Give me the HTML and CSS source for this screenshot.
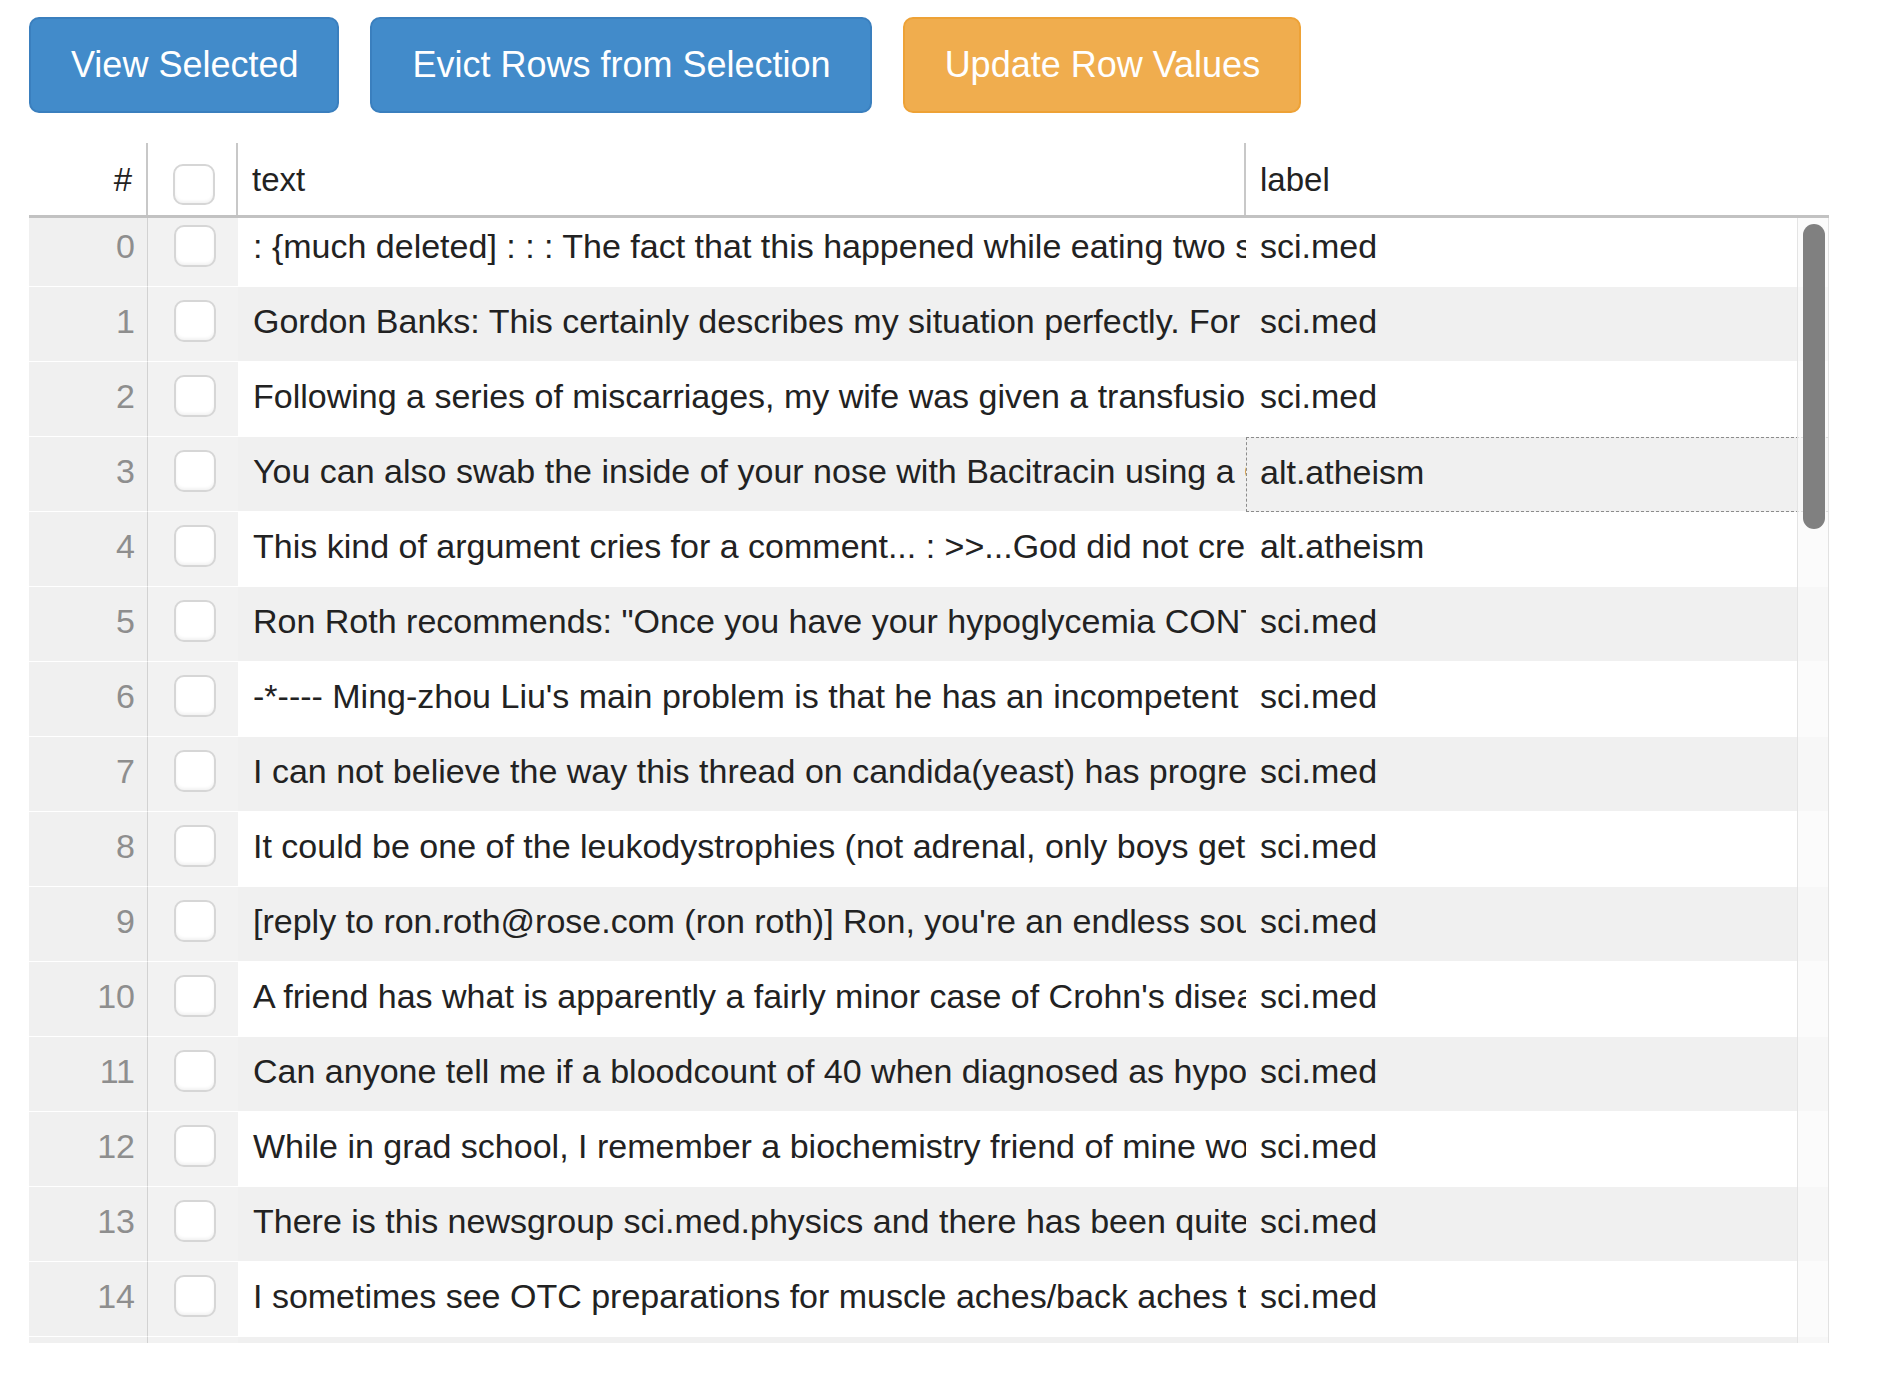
FILE: index.html
```html
<!DOCTYPE html>
<html lang="en">
<head>
<meta charset="utf-8">
<title>Grid</title>
<link rel="stylesheet" href="styles.css">
</head>
<body>
<div class="page">
  <div class="toolbar">
    <button class="btn btn-primary">View Selected</button>
    <button class="btn btn-primary">Evict Rows from Selection</button>
    <button class="btn btn-warning">Update Row Values</button>
  </div>
  <div class="grid">
    <div class="grid-header">
      <div class="hcell c-idx">#</div>
      <div class="hcell c-sel"><span class="cb cb-head"></span></div>
      <div class="hcell c-txt">text</div>
      <div class="hcell c-lbl">label</div>
    </div>
    <div class="viewport">
      <div class="rows">
        <div class="row even"><div class="cell c-idx">0</div><div class="cell c-sel"><span class="cb"></span></div><div class="cell c-txt">: {much deleted] : : : The fact that this happened while eating two servings of the same food</div><div class="cell c-lbl">sci.med</div></div>
        <div class="row odd"><div class="cell c-idx">1</div><div class="cell c-sel"><span class="cb"></span></div><div class="cell c-txt">Gordon Banks: This certainly describes my situation perfectly. For years I have</div><div class="cell c-lbl">sci.med</div></div>
        <div class="row even"><div class="cell c-idx">2</div><div class="cell c-sel"><span class="cb"></span></div><div class="cell c-txt">Following a series of miscarriages, my wife was given a transfusion of my white cells</div><div class="cell c-lbl">sci.med</div></div>
        <div class="row odd"><div class="cell c-idx">3</div><div class="cell c-sel"><span class="cb"></span></div><div class="cell c-txt">You can also swab the inside of your nose with Bacitracin using a Q-tip</div><div class="cell c-lbl focused">alt.atheism</div></div>
        <div class="row even"><div class="cell c-idx">4</div><div class="cell c-sel"><span class="cb"></span></div><div class="cell c-txt">This kind of argument cries for a comment... : &gt;&gt;...God did not create</div><div class="cell c-lbl">alt.atheism</div></div>
        <div class="row odd"><div class="cell c-idx">5</div><div class="cell c-sel"><span class="cb"></span></div><div class="cell c-txt">Ron Roth recommends: "Once you have your hypoglycemia CONTROLLED</div><div class="cell c-lbl">sci.med</div></div>
        <div class="row even"><div class="cell c-idx">6</div><div class="cell c-sel"><span class="cb"></span></div><div class="cell c-txt">-*---- Ming-zhou Liu's main problem is that he has an incompetent doctor</div><div class="cell c-lbl">sci.med</div></div>
        <div class="row odd"><div class="cell c-idx">7</div><div class="cell c-sel"><span class="cb"></span></div><div class="cell c-txt">I can not believe the way this thread on candida(yeast) has progressed</div><div class="cell c-lbl">sci.med</div></div>
        <div class="row even"><div class="cell c-idx">8</div><div class="cell c-sel"><span class="cb"></span></div><div class="cell c-txt">It could be one of the leukodystrophies (not adrenal, only boys get that one)</div><div class="cell c-lbl">sci.med</div></div>
        <div class="row odd"><div class="cell c-idx">9</div><div class="cell c-sel"><span class="cb"></span></div><div class="cell c-txt">[reply to ron.roth@rose.com (ron roth)] Ron, you're an endless source of</div><div class="cell c-lbl">sci.med</div></div>
        <div class="row even"><div class="cell c-idx">10</div><div class="cell c-sel"><span class="cb"></span></div><div class="cell c-txt">A friend has what is apparently a fairly minor case of Crohn's disease</div><div class="cell c-lbl">sci.med</div></div>
        <div class="row odd"><div class="cell c-idx">11</div><div class="cell c-sel"><span class="cb"></span></div><div class="cell c-txt">Can anyone tell me if a bloodcount of 40 when diagnosed as hypoglycemic</div><div class="cell c-lbl">sci.med</div></div>
        <div class="row even"><div class="cell c-idx">12</div><div class="cell c-sel"><span class="cb"></span></div><div class="cell c-txt">While in grad school, I remember a biochemistry friend of mine working on</div><div class="cell c-lbl">sci.med</div></div>
        <div class="row odd"><div class="cell c-idx">13</div><div class="cell c-sel"><span class="cb"></span></div><div class="cell c-txt">There is this newsgroup sci.med.physics and there has been quite a lot</div><div class="cell c-lbl">sci.med</div></div>
        <div class="row even"><div class="cell c-idx">14</div><div class="cell c-sel"><span class="cb"></span></div><div class="cell c-txt">I sometimes see OTC preparations for muscle aches/back aches that</div><div class="cell c-lbl">sci.med</div></div>
        <div class="row odd"><div class="cell c-idx">15</div><div class="cell c-sel"><span class="cb"></span></div><div class="cell c-txt">Does anyone know of a good reference on the subject</div><div class="cell c-lbl">sci.med</div></div>
      </div>
      <div class="scrollbar"><div class="thumb"></div></div>
    </div>
  </div>
</div>
</body>
</html>
```
FILE: styles.css
```css
html, body {
  margin: 0;
  padding: 0;
  background: #ffffff;
}

body {
  font-family: "Liberation Sans", Arial, Helvetica, sans-serif;
  color: #222222;
}

.page {
  padding: 17px 0 0 29px;
  width: 1800px;
}

/* ---------- toolbar ---------- */
.toolbar {
  display: flex;
  gap: 31px;
  margin-bottom: 30px;
}

.btn {
  font-family: "Liberation Sans", Arial, Helvetica, sans-serif;
  font-size: 36px;
  line-height: 48px;
  padding: 22px 39px 22px 40px;
  border: 2px solid transparent;
  border-radius: 10px;
  color: #ffffff;
  cursor: pointer;
  white-space: nowrap;
}

.btn-primary {
  background: #428bca;
  border-color: #3a7fbe;
}

.btn-warning {
  background: #f0ad4e;
  border-color: #eea236;
}

/* ---------- grid ---------- */
.grid {
  width: 1800px;
}

.grid-header {
  display: grid;
  grid-template-columns: 119px 90px 1008px 583px;
  height: 75px;
  box-sizing: border-box;
  border-bottom: 3px solid #c2c2c2;
  position: relative;
  z-index: 1;
  background: #ffffff;
}

.hcell {
  box-sizing: border-box;
  height: 72px;
  display: flex;
  align-items: center;
  padding-top: 2px;
  font-size: 33px;
  color: #222222;
  white-space: nowrap;
  overflow: hidden;
}

.hcell.c-idx {
  justify-content: flex-end;
  padding-right: 14px;
  border-right: 2px solid #c8c8c8;
}

.hcell.c-sel {
  align-items: flex-start;
  padding: 21px 0 0 25px;
  border-right: 2px solid #c8c8c8;
}

.hcell.c-txt {
  padding-left: 14px;
  border-right: 2px solid #c8c8c8;
}

.hcell.c-lbl {
  padding-left: 14px;
}

.viewport {
  position: relative;
  height: 1125px;
  overflow: hidden;
}

.rows {
  margin-top: -6px;
}

.row {
  display: grid;
  grid-template-columns: 119px 90px 1008px 583px;
  height: 75px;
}

.cell {
  box-sizing: border-box;
  height: 75px;
  display: flex;
  align-items: center;
  padding-bottom: 5px;
  border-bottom: 1px solid #ffffff;
  font-size: 34px;
  color: #222222;
  white-space: nowrap;
  overflow: hidden;
}

.cell.c-idx {
  background: #f0f0f0;
  color: #8e8e8e;
  justify-content: flex-end;
  padding-right: 12px;
  border-right: 1px solid #d2d2d2;
}

.cell.c-sel {
  background: #f2f2f2;
  align-items: flex-start;
  padding: 13px 0 0 26px;
}

.cell.c-txt {
  padding-left: 15px;
}

.cell.c-lbl {
  padding-left: 14px;
}

.row.odd .c-txt,
.row.odd .c-lbl {
  background: #f0f0f0;
}

.row.even .c-txt,
.row.even .c-lbl {
  background: #ffffff;
}

.cell.c-lbl.focused {
  border: 1px dashed #8c8c8c;
  padding-left: 13px;
  padding-bottom: 4px;
}

.cb {
  display: block;
  box-sizing: border-box;
  width: 42px;
  height: 42px;
  border: 2px solid #d6d6d6;
  border-radius: 10px;
  background: #ffffff;
  box-shadow: inset 0 -2px 3px rgba(0, 0, 0, 0.05);
}

.cb-head {
  height: 41px;
}

/* ---------- scrollbar overlay ---------- */
.scrollbar {
  position: absolute;
  top: 0;
  right: 0;
  bottom: 0;
  width: 32px;
  box-sizing: border-box;
  background: rgba(250, 250, 250, 0.75);
  border-left: 1px solid #e4e4e4;
  border-right: 1px solid #e2e2e2;
}

.thumb {
  margin: 6px 0 0 5px;
  width: 22px;
  height: 305px;
  border-radius: 11px;
  background: #808080;
}
```
